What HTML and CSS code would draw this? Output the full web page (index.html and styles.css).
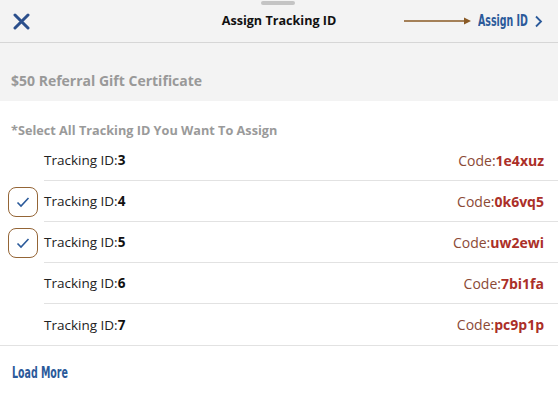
FILE: index.html
```html
<!DOCTYPE html>
<html lang="en">
<head>
    <meta charset="UTF-8">
    <meta name="viewport" content="width=device-width, initial-scale=1.0">
    <title>Assign Tracking ID</title>
    <link rel="stylesheet" href="styles.css">
</head>

<body>
    <!-- top sheet -->
    <div class="sheetTop">
        <span class="grabber"></span>
        <div class="header">
            <a class="btnClose" href="javascript:;">
                <svg width="17" height="17" viewBox="0 0 17 17"><path d="M2 2 L15 15 M15 2 L2 15" stroke="#2b4f8c" stroke-width="3" stroke-linecap="round"/></svg>
            </a>
            <h1 class="title">Assign Tracking ID</h1>
            <div class="assign">
                <svg class="arrow" width="68" height="8" viewBox="0 0 68 8"><path d="M0 4 H61" stroke="#8a5a25" stroke-width="1.5"/><path d="M60 0.5 L67 4 L60 7.5 Z" fill="#8a5a25"/></svg>
                <a class="btnAssign" href="javascript:;"><span class="narrow">Assign ID</span> <svg width="9" height="13" viewBox="0 0 9 13"><path d="M2 1.5 L7 6.5 L2 11.5" stroke="#2b5a9a" stroke-width="1.8" fill="none"/></svg></a>
            </div>
        </div>
        <p class="certName">$50 Referral Gift Certificate</p>
    </div>

    <!-- list -->
    <div class="listBox">
        <p class="tip">*Select All Tracking ID You Want To Assign</p>
        <ul class="idList">
            <li><span class="check"></span><div class="row"><span class="tid">Tracking ID:<b>3</b></span><span class="code">Code:<b>1e4xuz</b></span></div></li>
            <li class="on"><span class="check"><svg width="14" height="12" viewBox="0 0 14 12"><path d="M1.5 6.5 L5 10 L12.5 2" stroke="#2b5a9a" stroke-width="1.6" fill="none"/></svg></span><div class="row"><span class="tid">Tracking ID:<b>4</b></span><span class="code">Code:<b>0k6vq5</b></span></div></li>
            <li class="on"><span class="check"><svg width="14" height="12" viewBox="0 0 14 12"><path d="M1.5 6.5 L5 10 L12.5 2" stroke="#2b5a9a" stroke-width="1.6" fill="none"/></svg></span><div class="row"><span class="tid">Tracking ID:<b>5</b></span><span class="code">Code:<b>uw2ewi</b></span></div></li>
            <li><span class="check"></span><div class="row"><span class="tid">Tracking ID:<b>6</b></span><span class="code">Code:<b>7bi1fa</b></span></div></li>
            <li class="last"><span class="check"></span><div class="row"><span class="tid">Tracking ID:<b>7</b></span><span class="code">Code:<b>pc9p1p</b></span></div></li>
        </ul>
        <a class="loadMore" href="javascript:;"><span class="narrow">Load More</span></a>
    </div>
</body>

</html>
```

FILE: styles.css
```css
* {
    padding: 0;
    margin: 0;
}

body {
    width: 558px;
    height: 396px;
    overflow: hidden;
    background: #fff;
    font-family: "Open Sans", "Noto Sans", sans-serif;
}

ul {
    list-style: none;
}

a {
    text-decoration: none;
}

/* condensed headline-style links */
.narrow {
    display: inline-block;
    font-family: "DejaVu Sans", sans-serif;
    font-stretch: condensed;
    font-weight: 700;
    transform: scaleX(0.7);
    transform-origin: left center;
}

.sheetTop {
    background-color: #f3f3f3;
    height: 101px;
    position: relative;
}

.sheetTop .grabber {
    position: absolute;
    left: 261px;
    top: 1px;
    width: 34px;
    height: 4px;
    border-radius: 2px;
    background-color: #c4c4c4;
}

.header {
    height: 42px;
    border-bottom: 1px solid #d6d6d6;
    display: flex;
    align-items: center;
    position: relative;
}

.header .btnClose {
    display: flex;
    margin-left: 13px;
    margin-top: 1px;
}

.header .title {
    position: absolute;
    left: 0;
    right: 0;
    top: 12px;
    text-align: center;
    font-size: 12.6px;
    font-weight: 700;
    color: #111;
    pointer-events: none;
}

.header .assign {
    margin-left: auto;
    margin-right: 15px;
    display: flex;
    align-items: center;
}

.header .arrow {
    margin-right: 6px;
}

.header .btnAssign {
    display: flex;
    align-items: center;
    color: #2b5a9a;
    font-size: 15px;
}

.header .btnAssign .narrow {
    margin-right: -21px;
}

.header .btnAssign svg {
    margin-left: 6px;
}

.certName {
    padding: 28px 0 0 11px;
    font-size: 14px;
    font-weight: 700;
    color: #999;
}

.listBox .tip {
    padding: 20px 0 0 11px;
    font-size: 12.7px;
    font-weight: 700;
    color: #9a9a9a;
    line-height: 18px;
}

.idList {
    margin-top: 1px;
}

.idList li {
    display: flex;
    align-items: center;
    height: 41px;
}

.idList li .check {
    width: 30px;
    height: 30px;
    margin-left: 8px;
    margin-right: 6px;
    flex: none;
    box-sizing: border-box;
    display: flex;
    align-items: center;
    justify-content: center;
}

.idList li.on .check {
    border: 1.8px solid #946536;
    border-radius: 8px;
}

.idList .row {
    flex: 1;
    height: 100%;
    display: flex;
    align-items: center;
    justify-content: space-between;
    padding-right: 14px;
    border-bottom: 1px solid #e2e2e2;
    box-sizing: border-box;
    font-size: 13.5px;
}

.idList .row .code {
    font-size: 14px;
}

.idList li.last {
    border-bottom: 1px solid #e2e2e2;
}

.idList li.last .row {
    border-bottom: none;
}

.idList .tid {
    color: #222;
}

.idList .tid b {
    color: #111;
}

.idList .code {
    color: #8b4a36;
}

.idList .code b {
    color: #ab2f28;
}

.loadMore {
    display: inline-block;
    margin: 16px 0 0 12px;
    color: #2b5a9a;
    font-size: 15px;
}
```
